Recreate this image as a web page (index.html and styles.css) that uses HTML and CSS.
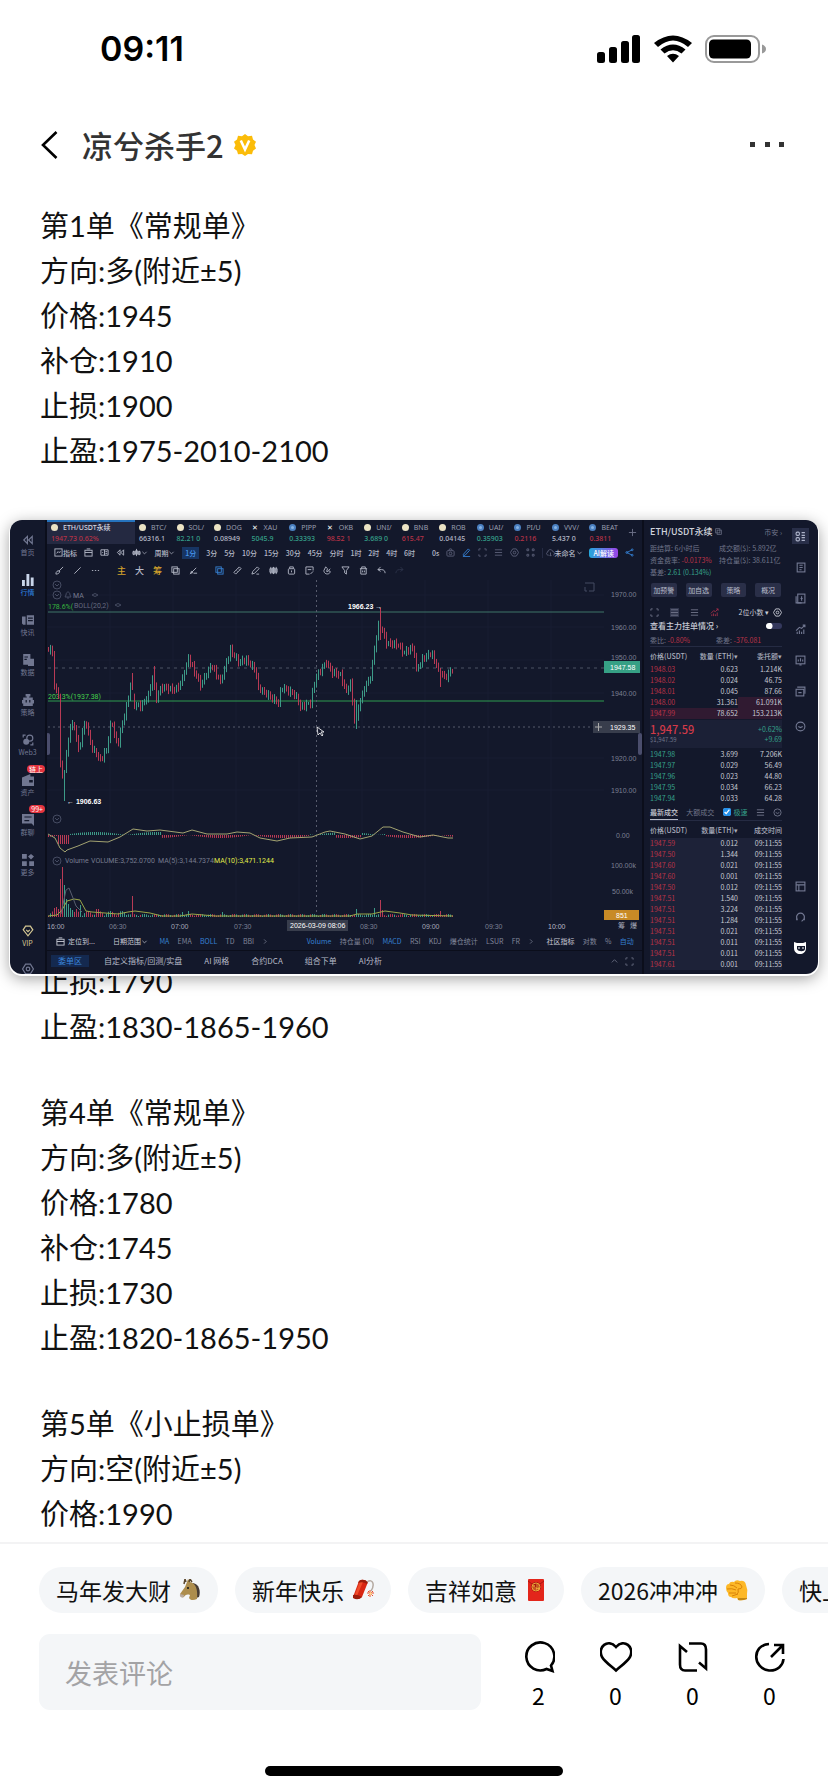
FILE: index.html
```html
<!DOCTYPE html>
<html lang="zh-CN">
<head>
<meta charset="utf-8">
<meta name="viewport" content="width=device-width">
<title>凉兮杀手2</title>
<link rel="stylesheet" href="styles.css">
</head>
<body>
<svg class="sprite" aria-hidden="true">
  <symbol id="i-down" viewBox="0 0 10 10"><path d="M2 4l3 3 3-3"/></symbol>
  <symbol id="i-right" viewBox="0 0 10 10"><path d="M3 2l3 3-3 3"/></symbol>
  <symbol id="i-chart" viewBox="0 0 10 10"><rect x="1" y="1" width="8" height="8"/><path d="M3 6l1.500-2 1 1L7.500 4"/></symbol>
  <symbol id="i-cal" viewBox="0 0 10 10"><rect x="1" y="2.500" width="8" height="6.500"/><path d="M3 1h4M1 5h8"/></symbol>
  <symbol id="i-book" viewBox="0 0 10 10"><path d="M1 2h8v6H1zM5 2v6M6 4h2M6 6h2M2.500 5h1"/></symbol>
  <symbol id="i-depth" viewBox="0 0 10 10"><rect x="1" y="1" width="3" height="3" rx="1"/><rect x="1" y="6" width="3" height="3" rx="1"/><path d="M6 1.500h3M6 4h3M6 6h3M6 8.500h3"/></symbol>
  <symbol id="i-rewind" viewBox="0 0 10 10"><path d="M4.500 2L1.500 5l3 3zM8.500 2l-3 3 3 3z"/></symbol>
  <symbol id="i-bars" viewBox="0 0 10 10"><path d="M2 3v5M5 1v8M8 3v5M1 4h2v3H1zM4 3h2v4H4zM7 4h2v3H7z"/></symbol>
  <symbol id="i-brush" viewBox="0 0 10 10"><path d="M9 1L4.500 5.500M4.500 5.500l1 1M1 9c0-3 2-4 3.500-3.500C6 7 4 9 1 9z"/></symbol>
  <symbol id="i-line" viewBox="0 0 10 10"><path d="M1.500 8.500l7-7"/></symbol>
  <symbol id="i-dots" viewBox="0 0 10 10"><path d="M1 5h1.500M4.300 5h1.500M7.600 5H9"/></symbol>
  <symbol id="i-copy" viewBox="0 0 10 10"><rect x="1" y="1" width="6" height="6"/><rect x="3" y="3" width="6" height="6"/></symbol>
  <symbol id="i-nodes" viewBox="0 0 10 10"><path d="M1 9l7-7M5 8h4"/><circle cx="3" cy="7" r="1"/></symbol>
  <symbol id="i-ruler" viewBox="0 0 10 10"><path d="M1 7l6-6 2 2-6 6zM4 5l1 1M6 3l1 1"/></symbol>
  <symbol id="i-pen" viewBox="0 0 10 10"><path d="M1 9l1-3 5-5 2 2-5 5zM6 9h3"/></symbol>
  <symbol id="i-candles" viewBox="0 0 10 10"><path d="M2 1v8M5 1v8M8 1v8M1 3h2v4H1zM4 2h2v6H4zM7 3h2v4H7z"/></symbol>
  <symbol id="i-bag" viewBox="0 0 10 10"><rect x="1.500" y="3" width="7" height="6" rx="1"/><path d="M3 3V1h4v2M5 5v2"/></symbol>
  <symbol id="i-note" viewBox="0 0 10 10"><path d="M9 5V1H1v8h4M3 4h4M6 9l3-3"/></symbol>
  <symbol id="i-magnet" viewBox="0 0 10 10"><path d="M3 1L1 5c0 5 7 5 7 1L6 5l2-2M3 1l2 2-1 3h2"/></symbol>
  <symbol id="i-filter" viewBox="0 0 10 10"><path d="M1 1h8L6 5v4L4 7.500V5z"/></symbol>
  <symbol id="i-trash" viewBox="0 0 10 10"><path d="M1 3h8M3 3V1h4v2M2 3v6h6V3M4 5v2M6 5v2"/></symbol>
  <symbol id="i-undo" viewBox="0 0 10 10"><path d="M4 1L1 4l3 2M1 4h4c3 0 4 2 4 4"/></symbol>
  <symbol id="i-redo" viewBox="0 0 10 10"><path d="M6 1l3 3-3 2M9 4H5C2 4 1 6 1 8"/></symbol>
  <symbol id="i-camera" viewBox="0 0 10 10"><rect x="1" y="3" width="8" height="6" rx="1"/><path d="M3 3l1-2h2l1 2"/><circle cx="5" cy="6" r="1.500"/></symbol>
  <symbol id="i-edit" viewBox="0 0 10 10"><path d="M1.500 7L7 1l1.500 1.500L3.500 8l-2 .3zM1 9.500h8"/></symbol>
  <symbol id="i-frame" viewBox="0 0 10 10"><path d="M1 3V1h2M7 1h2v2M9 7v2H7M3 9H1V7"/></symbol>
  <symbol id="i-menu" viewBox="0 0 10 10"><path d="M1 2h8M1 5h8M1 8h8"/></symbol>
  <symbol id="i-hex" viewBox="0 0 10 10"><path d="M3 1h4l2.500 4L7 9H3L.5 5z"/><circle cx="5" cy="5" r="1.500"/></symbol>
  <symbol id="i-grid" viewBox="0 0 10 10"><path d="M1 1h2v2H1zM7 1h2v2H7zM1 7h2v2H1zM7 7h2v2H7z"/></symbol>
  <symbol id="i-cloud" viewBox="0 0 10 10"><path d="M3 8C0 8 0 5 2 4.500 2 1 7 1 7.500 4 10 4 10 8 8 8M5 5v4M4 8l1 1 1-1"/></symbol>
  <symbol id="i-share" viewBox="0 0 10 10"><path d="M8 2L2 5l6 3"/><circle cx="8" cy="2" r="1"/><circle cx="2" cy="5" r="1"/><circle cx="8" cy="8" r="1"/></symbol>
  <symbol id="i-plus" viewBox="0 0 10 10"><path d="M5 1v8M1 5h8"/></symbol>
  <symbol id="i-eye" viewBox="0 0 10 10"><circle cx="5" cy="5" r="4"/><path d="M3 5l2 1 2-1"/></symbol>
  <symbol id="i-news" viewBox="0 0 10 10"><rect x="2" y="1" width="7" height="8"/><path d="M4 3h3M4 5h3M4 7h2"/></symbol>
  <symbol id="i-bill" viewBox="0 0 10 10"><rect x="2.500" y="1" width="6.500" height="8"/><path d="M1 3v6h5M6 3v4M5 5h2"/></symbol>
  <symbol id="i-trend" viewBox="0 0 10 10"><path d="M1 6l3-3 2 1 3-3M7 1h2v2M2 9V7M4 9V6M6 9V7M8 9V5"/></symbol>
  <symbol id="i-screen" viewBox="0 0 10 10"><rect x="1" y="1" width="8" height="7"/><path d="M3 6V4M5 6V3M7 6V4M4 9h2"/></symbol>
  <symbol id="i-cards" viewBox="0 0 10 10"><rect x="1" y="3" width="7" height="6"/><path d="M2 1h7v6M3 6h3"/></symbol>
  <symbol id="i-layout" viewBox="0 0 10 10"><rect x="1" y="1" width="8" height="8"/><path d="M1 3.500h8M3.500 3.500V9"/></symbol>
  <symbol id="i-headset" viewBox="0 0 10 10"><path d="M2 7C0 2 4 1 5 1s5 1 3 6M1.500 5v2h1M8.500 5v2h-1L6 8.500"/></symbol>
  <symbol id="i-bars-fill" viewBox="0 0 10 10"><path fill="currentColor" stroke="none" d="M0 5h2.400v5H0zM3.700 0h2.400v10H3.700zM7.300 3h2.400v7H7.300z"/></symbol>
  <symbol id="f-news" viewBox="0 0 10 10"><path fill="currentColor" stroke="none" d="M0 2h3v7H1L0 8zM4 1h6v8H4zM5 3v1h4V3zM5 5v1h4V5z"/></symbol>
  <symbol id="f-doc" viewBox="0 0 10 10"><path fill="currentColor" stroke="none" fill-rule="evenodd" d="M1 0h6v4h3v6H5V9H1zM2 2v1h3V2zM2 4v1h2V4z"/></symbol>
  <symbol id="f-robot" viewBox="0 0 10 10"><path fill="currentColor" stroke="none" fill-rule="evenodd" d="M3 0h4v2H6v1h3v2h1v3H9v2H1V8H0V5h1V3h3V2H3zM3 5v2h1V5zM6 5v2h1V5z"/></symbol>
  <symbol id="f-coins" viewBox="0 0 10 10"><circle cx="3.500" cy="6.500" r="2.500" fill="currentColor" stroke="none"/><circle cx="6.500" cy="3.500" r="2.500"/><path d="M1 3V1h2M7 9h2V7"/></symbol>
  <symbol id="f-wallet" viewBox="0 0 10 10"><path fill="currentColor" stroke="none" fill-rule="evenodd" d="M0 3l7-3v2h3v8H0zM6 5v2h3V5z"/></symbol>
  <symbol id="f-chat" viewBox="0 0 10 10"><path fill="currentColor" stroke="none" fill-rule="evenodd" d="M0 0h10v10L8 8H0zM2 2v1h6V2zM2 5v1h4V5z"/></symbol>
  <symbol id="f-grid" viewBox="0 0 10 10"><path fill="currentColor" stroke="none" d="M0 0h4v4H0zM7.500 0L10 2 7.500 4.500 5 2zM0 6h4v4H0zM6 6h4v4H6z"/></symbol>
  <symbol id="i-gem" viewBox="0 0 10 10"><path d="M3 1h4l2 3-4 5-4-5zM3.500 4L5 5.500 6.500 4"/></symbol>
</svg>

<header class="status">
  <time class="clock">09:11</time>
  <div class="status-icons" aria-hidden="true">
    <svg width="44" height="28" viewBox="0 0 44 28"><rect x="0" y="17" width="8" height="11" rx="2.500"/><rect x="12" y="12" width="8" height="16" rx="2.500"/><rect x="24" y="6" width="8" height="22" rx="2.500"/><rect x="35" y="0" width="8" height="28" rx="2.500"/></svg>
    <svg width="38" height="28" viewBox="0 0 38 28"><path d="M0 8Q19-7 38 8l-4 4Q19-1 4 12zM6.500 14.500q12.500-10 25 0l-4 4q-8.500-6.500-17 0zM13 21q6-4.500 12 0l-6 6.500z"/></svg>
    <svg width="62" height="28" viewBox="0 0 62 28"><rect x="1" y="1" width="53" height="26" rx="8" fill="none" stroke="#999" stroke-width="2"/><rect x="4" y="4.500" width="42" height="19" rx="4.500"/><path d="M57 9.500q4 1.500 4 4.500t-4 4.500z" fill="#999"/></svg>
  </div>
</header>

<nav class="topbar">
  <button class="icon-button" aria-label="返回"><svg width="18" height="30" viewBox="0 0 18 30"><path d="M15.500 2L2 15l13.500 13" fill="none" stroke="#000" stroke-width="2.600"/></svg></button>
  <h1>凉兮杀手2</h1>
  <svg class="verified" width="22" height="22" viewBox="0 0 22 22" role="img" aria-label="认证"><path d="M11 0l3 2.300 4-.5 1 3.600 3 2.300L20.500 11l1.500 3.500-3 2.300-1 3.500-4-.4L11 22l-3-2.100-4 .4-1-3.500-3-2.300L1.500 11 0 7.700l3-2.300 1-3.600 4 .5z" fill="#fbbc09"/><path d="M6.800 6.500l4.200 9 4.200-9" fill="none" stroke="#fff" stroke-width="2.600"/></svg>
  <button class="icon-button more" aria-label="更多"><svg width="36" height="6" viewBox="0 0 36 6"><path d="M0 0h5v5H0zM15 0h5v5h-5zM29 0h5v5h-5z" fill="#333"/></svg></button>
</nav>

<main class="post">
  <section class="order">
    <p>第1单《常规单》</p><p>方向:多(附近±5)</p><p>价格:1945</p><p>补仓:1910</p><p>止损:1900</p><p>止盈:1975-2010-2100</p>
  </section>

  <section class="pip" aria-label="行情画面">
    <nav class="side">
      <a class="side-item" href="#"><svg class="i"><use href="#i-rewind"/></svg>首页</a>
      <a class="side-item active" href="#"><svg class="i"><use href="#i-bars-fill"/></svg>行情</a>
      <a class="side-item" href="#"><svg class="i"><use href="#f-news"/></svg>快讯</a>
      <a class="side-item" href="#"><svg class="i"><use href="#f-doc"/></svg>数据</a>
      <a class="side-item" href="#"><svg class="i"><use href="#f-robot"/></svg>策略</a>
      <a class="side-item" href="#"><svg class="i"><use href="#f-coins"/></svg>Web3</a>
      <a class="side-item" href="#"><svg class="i"><use href="#f-wallet"/></svg>资产<span class="badge">链上</span></a>
      <a class="side-item" href="#"><svg class="i"><use href="#f-chat"/></svg>群聊<span class="badge">99+</span></a>
      <a class="side-item" href="#"><svg class="i"><use href="#f-grid"/></svg>更多</a>
      <a class="side-item vip" href="#"><svg class="i"><use href="#i-gem"/></svg>VIP</a>
      <a class="side-item settings" href="#" aria-label="设置"><svg class="i"><use href="#i-hex"/></svg></a>
    </nav>

    <div class="board">
      <div class="tickers">
        <div class="ticker current"><b><i class="coin"></i>ETH/USDT永续</b><span class="red">1947.73 0.62%</span></div>
        <div class="ticker"><b><i class="coin"></i>BTC/</b><span>66316.1</span></div>
        <div class="ticker"><b><i class="coin"></i>SOL/</b><span class="green">82.21 0</span></div>
        <div class="ticker"><b><i class="coin"></i>DOG</b><span>0.08949</span></div>
        <div class="ticker"><b><i class="coin cross">✕</i>XAU</b><span class="green">5045.9</span></div>
        <div class="ticker"><b><i class="coin blue"></i>PIPP</b><span class="green">0.33393</span></div>
        <div class="ticker"><b><i class="coin cross">✕</i>OKB</b><span class="red">98.52 1</span></div>
        <div class="ticker"><b><i class="coin"></i>UNI/</b><span class="green">3.689 0</span></div>
        <div class="ticker"><b><i class="coin"></i>BNB</b><span class="red">615.47</span></div>
        <div class="ticker"><b><i class="coin"></i>ROB</b><span>0.04145</span></div>
        <div class="ticker"><b><i class="coin blue"></i>UAI/</b><span class="green">0.35903</span></div>
        <div class="ticker"><b><i class="coin blue"></i>PI/U</b><span class="red">0.2116</span></div>
        <div class="ticker"><b><i class="coin blue"></i>VVV/</b><span>5.437 0</span></div>
        <div class="ticker"><b><i class="coin blue"></i>BEAT</b><span class="red">0.3811</span></div>
        <button class="add" aria-label="添加"><svg class="i"><use href="#i-plus"/></svg></button>
      </div>

      <div class="tools">
        <button><svg class="i"><use href="#i-chart"/></svg>指标</button>
        <button aria-label="日历"><svg class="i"><use href="#i-cal"/></svg></button>
        <button aria-label="对比"><svg class="i"><use href="#i-book"/></svg></button>
        <button aria-label="回放"><svg class="i"><use href="#i-rewind"/></svg></button>
        <button aria-label="图形"><svg class="i"><use href="#i-bars"/></svg><svg class="i s"><use href="#i-down"/></svg></button>
        <button>周期<svg class="i s"><use href="#i-down"/></svg></button>
        <button class="on">1分</button><button>3分</button><button>5分</button><button>10分</button><button>15分</button><button>30分</button><button>45分</button><button>分时</button><button>1时</button><button>2时</button><button>4时</button><button>6时</button>
        <button class="late">0s</button>
        <button class="dim" aria-label="截图"><svg class="i"><use href="#i-camera"/></svg></button>
        <button class="link" aria-label="编辑"><svg class="i"><use href="#i-edit"/></svg></button>
        <button class="dim" aria-label="全屏"><svg class="i"><use href="#i-frame"/></svg></button>
        <button class="dim" aria-label="列表"><svg class="i"><use href="#i-menu"/></svg></button>
        <button class="dim" aria-label="设置"><svg class="i"><use href="#i-hex"/></svg></button>
        <button class="dim" aria-label="布局"><svg class="i"><use href="#i-grid"/></svg></button>
        <button class="layout"><svg class="i dim"><use href="#i-cloud"/></svg>未命名<svg class="i s"><use href="#i-down"/></svg></button>
        <button class="ai">AI解读</button>
        <button class="link" aria-label="分享"><svg class="i"><use href="#i-share"/></svg></button>
      </div>

      <div class="tools draw">
        <button aria-label="画笔"><svg class="i"><use href="#i-brush"/></svg></button>
        <button aria-label="线段"><svg class="i"><use href="#i-line"/></svg></button>
        <button class="wide" aria-label="更多画线"><svg class="i"><use href="#i-dots"/></svg></button>
        <button class="gold">主</button><button>大</button><button class="gold">筹</button>
        <button aria-label="叠加"><svg class="i"><use href="#i-copy"/></svg></button>
        <button class="wide" aria-label="趋势"><svg class="i"><use href="#i-nodes"/></svg></button>
        <button class="link" aria-label="选择"><svg class="i"><use href="#i-copy"/></svg></button>
        <button aria-label="测量"><svg class="i"><use href="#i-ruler"/></svg></button>
        <button aria-label="铅笔"><svg class="i"><use href="#i-pen"/></svg></button>
        <button aria-label="K线"><svg class="i"><use href="#i-candles"/></svg></button>
        <button aria-label="收藏"><svg class="i"><use href="#i-bag"/></svg></button>
        <button aria-label="笔记"><svg class="i"><use href="#i-note"/></svg></button>
        <button aria-label="磁吸"><svg class="i"><use href="#i-magnet"/></svg></button>
        <button aria-label="筛选"><svg class="i"><use href="#i-filter"/></svg></button>
        <button aria-label="删除"><svg class="i"><use href="#i-trash"/></svg></button>
        <button aria-label="撤销"><svg class="i"><use href="#i-undo"/></svg></button>
        <button class="faint" aria-label="重做"><svg class="i"><use href="#i-redo"/></svg></button>
      </div>

      <svg class="chart" viewBox="47 580 595 352" role="img" aria-label="ETH/USDT 一分钟K线图">
        <g stroke="#181d32"><path d="M110 580v340M173 580v340M236 580v340M299 580v340M362 580v340M425 580v340M488 580v340M551 580v340M47 595h557M47 627h557M47 660h557M47 693h557M47 758h557M47 790h557"/></g>
        <g class="axis" fill="#7b8094">
          <text x="611" y="597">1970.00</text><text x="611" y="630">1960.00</text><text x="611" y="660">1950.00</text><text x="611" y="696">1940.00</text><text x="611" y="761">1920.00</text><text x="611" y="793">1910.00</text><text x="616" y="838">0.00</text><text x="611" y="868">100.00k</text><text x="612" y="894">50.00k</text>
          <text x="47" y="929" fill="#a5a9b8">16:00</text><text x="109" y="929">06:30</text><text x="171" y="929" fill="#a5a9b8">07:00</text><text x="234" y="929">07:30</text><text x="360" y="929">08:30</text><text x="422" y="929" fill="#a5a9b8">09:00</text><text x="485" y="929">09:30</text><text x="548" y="929" fill="#b8bbc8">10:00</text>
          <text x="618" y="928" fill="#a5a9b8">筹</text><text x="630" y="928" fill="#a5a9b8">爆</text>
        </g>
        <g class="mini-icon"><circle cx="57" cy="585" r="4"/><path d="M55 584l2 2 2-2"/><circle cx="57" cy="595" r="4"/><path d="M55 594l2 2 2-2M65 597h6l-1-2c0-4-4-4-4 0zM67 598h2"/><circle cx="57" cy="819" r="4"/><path d="M55 818l2 2 2-2"/><circle cx="57" cy="861" r="4"/><path d="M55 860l2 2 2-2M92 595q3-3 6 0q-3 3-6 0M115 605q3-3 6 0q-3 3-6 0M585 583h9v8h-5M587 591h-2v-4"/></g>
        <g class="legend"><text x="73" y="598" fill="#777c90">MA</text><text x="74" y="608" fill="#666b80">BOLL(20,2)</text><text x="48" y="609" fill="#36b33e">178.6%(</text><text x="48" y="699" fill="#45d14c">203.3%(1937.38)</text><text x="65" y="863" fill="#777c90">Volume</text><text x="91" y="863" fill="#777c90">VOLUME:3,752.0700</text><text x="158" y="863" fill="#777c90">MA(5):3,144.7374</text><text x="214" y="863" fill="#e2ec4a">MA(10):3,471.1244</text></g>
        <path d="M48 612h556" stroke="#3f7469"/><path d="M48 701h556" stroke="#2e9c50"/>
        <path d="M48 668h556" stroke="#4d5264" stroke-dasharray="3 4"/>
        <path d="M48 727h545M316.500 580v340" stroke="#575b6d" stroke-dasharray="2 3"/>
        <path id="up" stroke="#3d9b88"/><path id="down" stroke="#b83a55"/>
        <path d="M48 834L55 838 60 848 65 852 67 850 78 846 90 841 108 842 120 837 133 829 147 831 160 830 183 833 192 830 207 834 227 834 237 832 250 833 260 838 277 841 290 838 312 837 325 832 330 831 345 834 360 839 372 836 383 827 390 827 403 832 420 837 433 835 448 838 453 838" fill="none" stroke="#a3a371"/>
        <path d="M48 916L57 915 62 910 67 901 74 899 80 900 86 911 92 912 118 914 128 912 135 911 150 913 162 916 180 916 192 914 215 916 300 916 350 916 357 914 372 914 385 911 400 913 412 915 453 916" fill="none" stroke="#9aa548"/>
        <path d="M61 914l5-24 3-2 4 10 3 8 6 6" fill="none" stroke="#595f70"/>
        <g class="marks" fill="#fff"><text x="348" y="609">1966.23 →</text><text x="67" y="804">← 1906.63</text></g>
        <rect x="604" y="661" width="36" height="12" fill="#36a085"/><text class="tag" x="610" y="670">1947.58</text>
        <rect x="593" y="721" width="47" height="12" fill="#383d4c"/><text class="tag" x="610" y="730">1929.35</text><path d="M595 727h7M598.500 723v8" stroke="#aaa"/>
        <rect x="604" y="910" width="35" height="10" fill="#c88a26"/><text class="tag" x="616" y="918">851</text>
        <rect x="287" y="920" width="61" height="11" fill="#383d4c"/><text class="tag" x="290" y="928">2026-03-09 08:06</text>
        <rect x="46" y="733" width="4" height="22" rx="2" fill="#4a4d6c"/><rect x="638" y="733" width="4" height="22" rx="2" fill="#4a4d6c"/>
        <path d="M317 727l1 8 2-2 2 3 1-1-2-3h3z" fill="#14182c" stroke="#fff" stroke-width=".8"/>
      </svg>

      <div class="indicators">
        <button class="bright"><svg class="i"><use href="#i-cal"/></svg>定位到...</button>
        <button class="bright range">日期范围<svg class="i s"><use href="#i-down"/></svg></button>
        <button class="link">MA</button><button>EMA</button><button class="link">BOLL</button><button>TD</button><button>BBI</button><button class="next" aria-label="更多主图指标"><svg class="i s"><use href="#i-right"/></svg></button>
        <button class="link">Volume</button><button>持仓量 (OI)</button><button class="link">MACD</button><button>RSI</button><button>KDJ</button><button>爆仓统计</button><button>LSUR</button><button>FR</button><button aria-label="更多副图指标"><svg class="i s"><use href="#i-right"/></svg></button>
        <button class="bright">社区指标</button><button>对数</button><button>%</button><button class="link">自动</button>
      </div>
      <div class="bottom-tabs">
        <button class="on">委单区</button><button>自定义指标/回测/实盘</button><button>AI 网格</button><button>合约DCA</button><button>组合下单</button><button>AI分析</button>
        <span class="corner"><svg class="i" viewBox="0 0 10 10"><path d="M2 6l3-3 3 3"/></svg><svg class="i"><use href="#i-frame"/></svg></span>
      </div>
    </div>

    <aside class="book">
      <div class="row title"><strong>ETH/USDT永续 <svg class="i"><use href="#i-copy"/></svg></strong><span>币安 ›</span></div>
      <div class="facts"><span>距结算: 6小时后</span><span>成交额($): 5.892亿</span><span>资金费率: <em class="red">-0.0173%</em></span><span>持仓量($): 38.611亿</span><span>基差: <em class="green">2.61 (0.134%)</em></span></div>
      <div class="actions"><button>加预警</button><button>加自选</button><button>策略</button><button>概况</button></div>
      <div class="row depth"><span class="modes"><svg class="i"><use href="#i-frame"/></svg><svg class="i sel"><use href="#i-menu"/></svg><svg class="i"><use href="#i-menu"/></svg><svg class="i redline"><use href="#i-trend"/></svg></span><span class="bright">2位小数 ▾ <svg class="i"><use href="#i-hex"/></svg></span></div>
      <label class="row switch"><b>查看主力挂单情况 ›</b><input type="checkbox"></label>
      <div class="ratio"><span>委比: <em class="red">-0.80%</em></span><span>委差: <em class="red">-376.081</em></span></div>
      <table>
        <thead><tr><th>价格(USDT)</th><th>数量 (ETH)▾</th><th>委托额▾</th></tr></thead>
        <tbody class="ask"><tr><td>1948.03</td><td>0.623</td><td>1.214K</td></tr><tr><td>1948.02</td><td>0.024</td><td>46.75</td></tr><tr><td>1948.01</td><td>0.045</td><td>87.66</td></tr><tr class="part"><td>1948.00</td><td>31.361</td><td>61.091K</td></tr><tr class="full"><td>1947.99</td><td>78.652</td><td>153.213K</td></tr></tbody>
      </table>
      <div class="last"><div><strong>1,947.59</strong><small>$1,947.59</small></div><div class="delta"><span>+0.62%</span><span>+9.69</span></div></div>
      <table><tbody class="bid"><tr><td>1947.98</td><td>3.699</td><td>7.206K</td></tr><tr><td>1947.97</td><td>0.029</td><td>56.49</td></tr><tr><td>1947.96</td><td>0.023</td><td>44.80</td></tr><tr><td>1947.95</td><td>0.034</td><td>66.23</td></tr><tr><td>1947.94</td><td>0.033</td><td>64.28</td></tr></tbody></table>
      <div class="row deals"><b>最新成交</b><span>大额成交</span><label><input type="checkbox" checked>极速</label><svg class="i"><use href="#i-menu"/></svg><svg class="i"><use href="#i-eye"/></svg></div>
      <table>
        <thead><tr><th>价格(USDT)</th><th>数量(ETH)▾</th><th>成交时间</th></tr></thead>
        <tbody class="ask trades"><tr><td>1947.59</td><td>0.012</td><td>09:11:55</td></tr><tr><td>1947.50</td><td>1.344</td><td>09:11:55</td></tr><tr><td>1947.60</td><td>0.021</td><td>09:11:55</td></tr><tr><td>1947.60</td><td>0.001</td><td>09:11:55</td></tr><tr><td>1947.50</td><td>0.012</td><td>09:11:55</td></tr><tr><td>1947.51</td><td>1.540</td><td>09:11:55</td></tr><tr><td>1947.51</td><td>3.224</td><td>09:11:55</td></tr><tr><td>1947.51</td><td>1.284</td><td>09:11:55</td></tr><tr><td>1947.51</td><td>0.021</td><td>09:11:55</td></tr><tr><td>1947.51</td><td>0.011</td><td>09:11:55</td></tr><tr><td>1947.51</td><td>0.011</td><td>09:11:55</td></tr><tr><td>1947.61</td><td>0.001</td><td>09:11:55</td></tr></tbody>
      </table>
    </aside>

    <div class="rail">
      <button class="on" aria-label="盘口"><svg class="i"><use href="#i-depth"/></svg></button>
      <button aria-label="资讯"><svg class="i"><use href="#i-news"/></svg></button>
      <button aria-label="账单"><svg class="i"><use href="#i-bill"/></svg></button>
      <button aria-label="趋势"><svg class="i"><use href="#i-trend"/></svg></button>
      <button aria-label="监控"><svg class="i"><use href="#i-screen"/></svg></button>
      <button aria-label="卡片"><svg class="i"><use href="#i-cards"/></svg></button>
      <button class="split" aria-label="关注"><svg class="i"><use href="#i-eye"/></svg></button>
      <button class="push" aria-label="布局"><svg class="i"><use href="#i-layout"/></svg></button>
      <button aria-label="客服"><svg class="i"><use href="#i-headset"/></svg></button>
      <button aria-label="助手"><svg width="14" height="14" viewBox="0 0 14 14"><path d="M1 1l3 1h6l3-1v6c0 8-12 8-12 0z" fill="#fff"/><path d="M4 5h8v3c0 3-7 3-8 0z" fill="#151a2e"/><path d="M6 6v2M10 6v2" stroke="#fff"/></svg></button>
    </div>
  </section>

  <section class="order tucked"><p>止损:1790</p><p>止盈:1830-1865-1960</p></section>
  <section class="order"><p>第4单《常规单》</p><p>方向:多(附近±5)</p><p>价格:1780</p><p>补仓:1745</p><p>止损:1730</p><p>止盈:1820-1865-1950</p></section>
  <section class="order"><p>第5单《小止损单》</p><p>方向:空(附近±5)</p><p>价格:1990</p></section>
</main>

<footer class="composer">
  <div class="chips">
    <button class="chip">马年发大财<svg width="22" height="22" viewBox="0 0 22 22"><path d="M14 4c6 1 8 8 6 14l-3 1-5-13z" fill="#463b34"/><path d="M8 3l1-3 2 3c6 1 8 8 7 17-4 2-7 1-8-1l1-3c-3-1-5 0-6 2-3 1-4-1-4-3L6 8z" fill="#ad8d4d"/><path d="M7 3L6 0 5 5M10 3l1-3 2 3" fill="none" stroke="#59462d" stroke-width="1.500"/><circle cx="9" cy="9" r="1" fill="#111"/><path d="M1 15c-1 4 4 5 4 1" fill="#b9aaa0"/></svg></button>
    <button class="chip">新年快乐<svg width="22" height="22" viewBox="0 0 22 22"><path d="M7 2q4-3 9 1l-6 15q-4 4-9 0z" fill="#d92613"/><path d="M8 2l3 1-7 16-2-1z" fill="#f04c2a"/><path d="M7 2q4-3 9 1l-1 2q-4-3-9-1zM1 16q4-1 9 2-4 4-9 1z" fill="#9d1d0c"/><path d="M15 3c6-4 8 3 4 9" fill="none" stroke="#b5aaa1" stroke-width="1.500"/><path d="M18 11v7M15 14h7M16 12l5 5M21 12l-5 5" stroke="#e84a2a"/><circle cx="18.500" cy="14.500" r="1.500" fill="#ffd18a"/></svg></button>
    <button class="chip">吉祥如意<svg width="22" height="22" viewBox="0 0 22 22"><rect x="3" width="16" height="22" rx="1" fill="#e3261b"/><path d="M3 2q8 8 16 0" fill="none" stroke="#a81712"/><circle cx="11" cy="8" r="5" fill="#a91812"/><circle cx="11" cy="8" r="4" fill="none" stroke="#e9a838"/><path d="M9 6v5M8 7h2M11 6h3M11 8h3v3h-3zM11 9.500h3" fill="none" stroke="#f3b83e" stroke-width=".8"/></svg></button>
    <button class="chip">2026冲冲冲<svg width="22" height="22" viewBox="0 0 22 22"><path d="M0 9Q0 5 3 5 4 2 8 3 10 0 14 2 19 1 20 6q2 5 1 9v5q-4 2-9 1l-1-2q-4 1-6-1-3 0-3-4-2-2-2-5z" fill="#fdb827"/><path d="M4 6q4 0 7 3M1 10q5-1 9 1M3 14h7M6 17l6-2" fill="none" stroke="#d98208"/><path d="M9 4q6 0 7 4 0 2-4 2 1 4-1 5" fill="none" stroke="#d98208"/><path d="M12 19h9v1q-5 2-9 1z" fill="#c48713"/></svg></button>
    <button class="chip">快上车<svg width="22" height="22" viewBox="0 0 22 22"><rect y="8" width="22" height="9" rx="3" fill="#e3261b"/></svg></button>
  </div>
  <div class="reply">
    <input type="text" placeholder="发表评论" aria-label="发表评论">
    <button class="act"><svg width="32" height="32" viewBox="0 0 32 32"><path d="M28 24.500A14 14 0 1 0 23.500 28L29.500 30z"/></svg>2</button>
    <button class="act"><svg width="32" height="32" viewBox="0 0 32 32"><path d="M16 6C8-3-3 6 2 16c3 5 9 9 14 13.500C21 25 27 21 30 16c5-10-6-19-14-10z"/></svg>0</button>
    <button class="act"><svg width="32" height="32" viewBox="0 0 32 32"><path d="M12 2.500h12q5 0 5 6v19l-7-6M20 29.500H8q-5 0-5-6V5l7 6"/></svg>0</button>
    <button class="act"><svg width="32" height="32" viewBox="0 0 32 32"><path d="M15 3C-2 4-2 27 15 29.500 24 30 29 24 29.500 18M17 16L28.500 4.500M20 4h9v9"/></svg>0</button>
  </div>
  <div class="home"></div>
</footer>
<script src="chart.js"></script>
</body>
</html>
```

FILE: styles.css
```css
* { box-sizing: border-box; }
body {
  margin: 0;
  min-height: 100vh;
  display: flex;
  flex-direction: column;
  background: #fff;
  color: #111;
  font-family: "Noto Sans CJK SC", sans-serif;
  overflow-x: hidden;
}
button { border: 0; padding: 0; background: none; color: inherit; font: inherit; }
p, h1 { margin: 0; }
a { color: inherit; text-decoration: none; }
em, i { font-style: normal; }
.sprite { display: none; }

.status { display: flex; justify-content: space-between; align-items: center; height: 98px; padding: 0 61px 0 100px; }
.clock { font: 600 34px/40px Inter, sans-serif; color: #000; }
.status-icons { display: flex; gap: 13px; }

.topbar { display: flex; align-items: center; height: 94px; padding: 0 42px 0 41px; }
.icon-button { display: flex; }
.topbar h1 { margin-left: 23px; font-size: 31px; line-height: 44px; font-weight: 500; color: #333; }
.verified { margin-left: 10px; }
.more { margin-left: auto; }

.post { flex: 1; padding: 11px 0 0; }
.order { padding: 0 40px; font: 29px/45px Lato, "Noto Sans CJK SC", sans-serif; }
.order + .order { margin-top: 41px; }
.order.tucked { margin-top: -15px; }

.pip {
  position: relative;
  z-index: 1;
  display: grid;
  grid-template-columns: 37px minmax(0, 1fr) 146px 30px;
  margin: 47px 10px 0;
  border-radius: 12px;
  overflow: hidden;
  background: #13182b;
  color: #b6bac8;
  font-size: 8px;
  line-height: 10px;
  box-shadow: 0 1px 0 1px #fff, 0 4px 16px #0006;
  white-space: nowrap;
}
.pip .i { width: 9px; height: 9px; fill: none; stroke: currentColor; flex: none; }
.pip .i.s { width: 7px; height: 7px; }
.pip button { display: flex; align-items: center; justify-content: center; }
.red { color: #b83247; }
.green { color: #35a08a; }
.gold { color: #d3a22c; }
.link { color: #3680d2; }
.dim { color: #5b6078; }
.faint { color: #2d334a; }
.bright { color: #c9ccd6; }

.side { display: flex; flex-direction: column; padding-top: 14px; border-right: 2px solid #0b0e1b; color: #717791; font-size: 7px; }
.side-item { position: relative; display: flex; flex-direction: column; align-items: center; height: 40px; gap: 1px; }
.side-item .i { width: 12px; height: 12px; }
.side-item.active { color: #2f87e8; }
.side-item.active .i { color: #c9d5ea; }
.side-item.vip { height: 38px; margin-top: 31px; color: #d5c894; }
.side-item.settings { height: 11px; }
.badge { position: absolute; top: -9px; right: 0; padding: 0 2px; border-radius: 5px; background: #e5343e; color: #fff; line-height: 8px; font-size: 7px; }

.tickers { display: grid; grid-template-columns: 88px repeat(13, minmax(0, 1fr)) 19px; height: 24px; }
.ticker { display: flex; flex-direction: column; padding: 2px 0 0 4px; overflow: hidden; font: 7px/11px "Noto Sans", "Noto Sans CJK SC", sans-serif; }
.ticker b { display: flex; align-items: center; gap: 5px; font-weight: 400; color: #999eae; }
.ticker span { font-weight: 500; }
.ticker.current { border-top: 2px solid #2673bd; padding-top: 0; background: #242941; }
.ticker.current b { color: #d6d8e0; font-weight: 500; }
.coin { flex: none; width: 7px; height: 7px; border-radius: 50%; background: #ebe3c4; }
.coin.blue { background: #87b3e3; border: 2px solid #4b80c1; }
.coin.cross { background: none; color: #fff; line-height: 7px; }
.add { color: #6d7289; }

.tools { display: flex; align-items: center; justify-content: space-between; height: 17px; padding: 0 8px 0 7px; font-size: 7px; font-weight: 500; }
.tools .on { background: #173563; color: #4796ee; padding: 1px 3px; }
.late { margin-left: 10px; }
.tools .ai { padding: 0 4px; border-radius: 3px; background: linear-gradient(90deg, #24a7db, #9c44e8); color: #fff; }
.tools .layout { border-left: 1px solid #252b43; padding-left: 3px; }
.tools.draw { justify-content: flex-start; gap: 9px; height: 19px; padding-left: 8px; font-size: 9px; }
.draw .wide { margin-right: 8px; }
.draw button { width: 9px; }

.chart { display: block; width: 100%; height: auto; fill: none; font-family: "Liberation Sans", "Noto Sans CJK SC", sans-serif; font-size: 7px; }
.chart .mini-icon { stroke: #454b62; }
.chart .legend { font-family: Roboto, sans-serif; }
.chart .tag { fill: #fff; }
.chart .marks { font-weight: 700; }

.indicators { display: flex; align-items: center; justify-content: space-between; height: 19px; padding: 0 8px 0 9px; border-bottom: 1px solid #0b0e1b; color: #80859a; font-size: 7px; }
.indicators .i { margin-right: 3px; }
.indicators .range { padding-left: 10px; }
.indicators .next { margin-right: 26px; }
.indicators .link { color: #3680d2; }
.bottom-tabs { display: flex; align-items: center; gap: 22px; height: 20px; padding: 0 8px 0 4px; font-size: 8px; }
.bottom-tabs .on { margin-right: -7px; padding: 1px 7px; background: #14294f; color: #3c87db; }
.corner { display: flex; gap: 6px; margin-left: auto; color: #666b80; }

.book { padding: 5px 6px 0; border-left: 2px solid #0b0e1b; color: #70758a; font-size: 7px; }
.row { display: flex; align-items: center; justify-content: space-between; }
.title { height: 14px; margin-bottom: 2px; }
.title strong { font-size: 9px; font-weight: 500; color: #d0d3dc; }
.title .i { width: 7px; height: 7px; color: #70758a; }
.facts { display: grid; grid-template-columns: 69px 1fr; line-height: 12px; padding-top: 1px; }
.actions { display: grid; grid-template-columns: repeat(4, 1fr); gap: 9px; padding: 5px 1px 0; }
.actions button { height: 14px; border-radius: 2px; background: #2a2f48; color: #b7bbc9; }
.depth { height: 14px; margin-top: 8px; }
.modes { display: flex; gap: 11px; }
.modes .sel { background: #31364d; }
.redline { color: #a42f49; }
.depth .bright { display: flex; align-items: center; gap: 4px; }
.switch { height: 14px; }
.switch b { font-size: 8px; font-weight: 500; color: #c9ccd6; }
.switch input { appearance: none; margin: 0; width: 16px; height: 6px; border-radius: 3px; background: radial-gradient(circle at 3px 3px, #fff 3px, #34385d 4px); }
.ratio { display: grid; grid-template-columns: 66px 1fr; height: 14px; line-height: 14px; border-bottom: 1px solid #252b43; }
.book table { width: 100%; border-collapse: collapse; table-layout: fixed; font-size: 7px; }
.book th { height: 17px; padding: 0; font-size: 7px; font-weight: 500; text-align: right; color: #a9adbb; }
.book th:first-child, .book td:first-child { text-align: left; }
.book td { height: 11px; padding: 0; line-height: 11px; text-align: right; color: #c6c9d3; }
.book .ask td:first-child { color: #b83247; }
.book .bid td:first-child { color: #35a08a; }
.ask .part td:last-child { background: #301a31; }
.ask .full td { background: #301a31; }
.last { display: flex; justify-content: space-between; height: 28px; margin: 1px 0; padding-top: 2px; background: #1b2036; }
.last strong { display: block; font-size: 11px; line-height: 14px; font-weight: 500; color: #d23a48; }
.last small { display: block; font-size: 6px; line-height: 8px; }
.delta { display: flex; flex-direction: column; padding-top: 2px; text-align: right; color: #35a08a; }
.deals { height: 17px; gap: 4px; border-bottom: 1px solid #252b43; }
.deals b { align-self: stretch; line-height: 16px; border-bottom: 1px solid #b6bac8; font-weight: 500; color: #c9ccd6; }
.deals label { display: flex; align-items: center; gap: 3px; color: #35a08a; }
.deals input { margin: 0; width: 8px; height: 8px; accent-color: #238fe9; }
.trades { background: #1d2238; }

.rail { display: flex; flex-direction: column; align-items: center; gap: 15px; padding: 8px 6px 18px 0; color: #737993; }
.rail button { width: 17px; height: 16px; }
.rail .i { width: 11px; height: 11px; }
.rail .on { background: #292f49; color: #aeb4ca; }
.rail .split { margin-top: 4px; }
.rail .push { margin-top: auto; }

.composer { border-top: 2px solid #f3f3f4; padding: 23px 0 16px; }
.chips { display: flex; gap: 17px; padding: 0 0 0 39px; overflow: hidden; }
.chip { display: flex; align-items: center; flex: none; gap: 8px; height: 46px; padding: 0 17px; border-radius: 23px; background: #f4f6f8; font-size: 23px; color: #111; }
.reply { display: flex; align-items: center; padding: 21px 20px 0 39px; }
.reply input { flex: 1; min-width: 0; height: 76px; margin-right: 19px; padding: 0 26px; border: 0; border-radius: 11px; background: #f4f6f8; font: 27px "Noto Sans CJK SC", sans-serif; }
.reply input::placeholder { color: #a3a3a5; opacity: 1; }
.act { display: flex; flex-direction: column; align-items: center; width: 77px; gap: 8px; padding-top: 6px; font: 23px/28px "Noto Sans CJK SC", sans-serif; color: #000; }
.act svg { fill: none; stroke: #000; stroke-width: 2.6; }
.home { width: 36%; height: 10px; margin: 56px auto 0; border-radius: 5px; background: #000; }
```

FILE: chart.js
```js
const track = [[48,648],[54,652],[55,685],[60,695],[61,750],[63,780],[67,763],[72,725],[76,727],[80,750],[87,720],[93,747],[102,760],[108,750],[113,720],[119,747],[123,727],[129,703],[132,685],[135,705],[143,706],[150,695],[154,678],[158,698],[163,687],[177,690],[183,682],[190,658],[202,685],[213,665],[222,682],[232,650],[240,662],[248,660],[257,670],[260,688],[280,703],[283,687],[297,695],[302,707],[312,703],[317,678],[328,662],[333,672],[342,675],[348,692],[352,683],[355,712],[357,725],[360,707],[367,685],[372,678],[375,655],[380,625],[383,628],[388,643],[400,645],[405,653],[415,647],[418,670],[425,658],[433,653],[440,670],[447,678],[453,670]];
const priceAt = x => {
  const k = Math.max(1, track.findIndex(p => p[0] >= x));
  const [a, b] = [track[k - 1], track[k]];
  return a[1] + (b[1] - a[1]) * (x - a[0]) / (b[0] - a[0]);
};
const volumes = { 54: 9, 56: 10, 58: 8, 60: 38, 62: 50, 64: 32, 66: 18, 68: 13, 70: 9, 72: 7, 76: 8, 80: 12, 96: 8, 98: 8, 132: 21, 182: 5, 188: 6, 222: 5, 356: 8, 374: 9, 380: 17, 382: 7, 440: 6 };
const wicks = { 64: [770, 801], 132: [673, 690], 154: [666, 690], 380: [608, 640], 440: [668, 687], 356: [700, 729] };
const paths = { up: '', down: '' };
for (let x = 48, n = 0; x <= 452; x += 2, n++) {
  const open = priceAt(x) + Math.sin(n * 2.3) * 2;
  const close = priceAt(Math.min(453, x + 2)) + Math.sin((n + 1) * 2.3) * 2;
  const side = close < open ? 'up' : 'down';
  const reach = 1 + Math.abs(Math.sin(n * 5.1)) * 3;
  const [top, bottom] = wicks[x] || [Math.min(open, close) - reach, Math.max(open, close) + reach];
  const vol = volumes[x] || 1 + Math.abs(Math.sin(n * 3.7)) * (x < 130 ? 5 : 2);
  const macd = x < 70 && x > 56 ? 9 : Math.abs(Math.sin(x / 20)) * 3;
  const low = x < 70 || (x > 160 && x < 310) || (x > 335 && x < 362) || x > 385;
  paths[side] += `M${x + .5} ${top.toFixed(1)}V${bottom.toFixed(1)}M${x + .5} 917v${-vol.toFixed(1)}`;
  paths[low ? 'down' : 'up'] += `M${x + .5} 835v${(low ? macd : -macd).toFixed(1)}`;
}
for (const side in paths) document.getElementById(side).setAttribute('d', paths[side]);
```
